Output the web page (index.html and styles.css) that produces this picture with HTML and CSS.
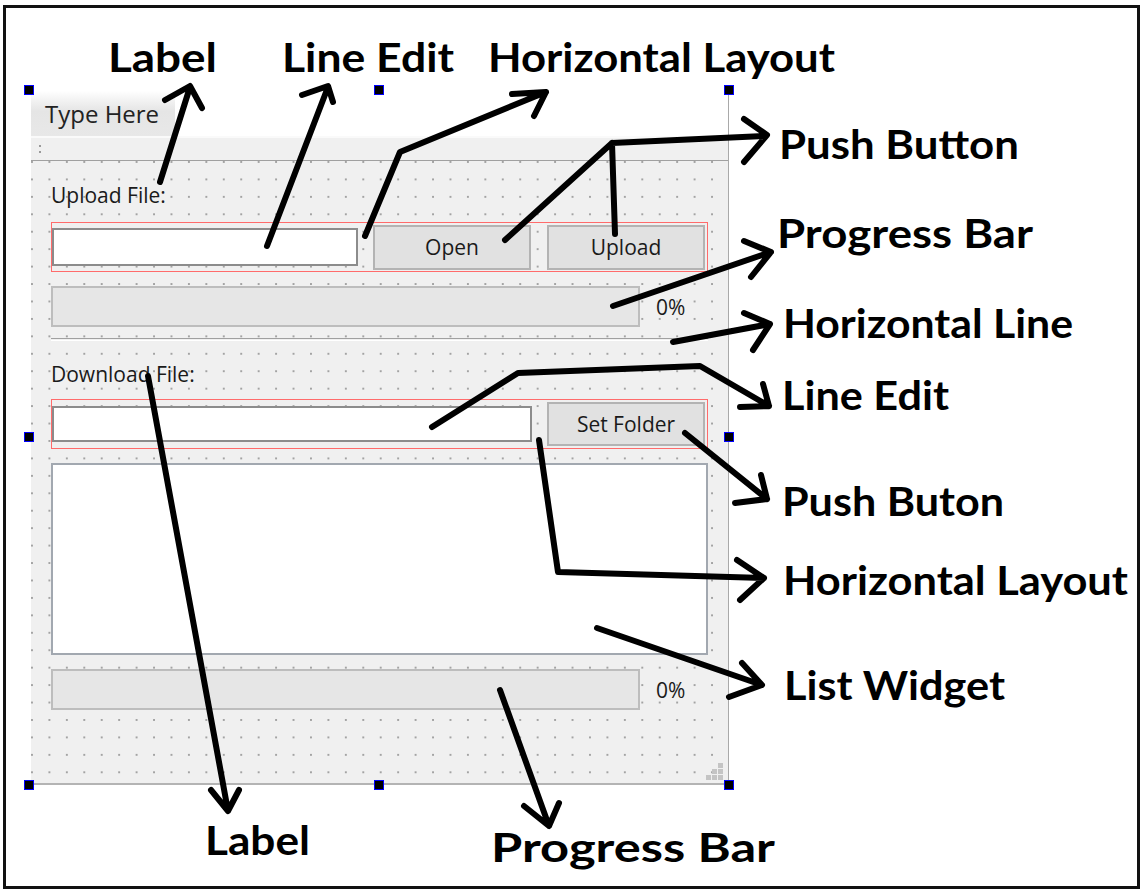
FILE: index.html
```html
<!DOCTYPE html>
<html lang="en">
<head>
    <meta charset="UTF-8">
    <title>Qt Designer form - widget map</title>
    <link rel="stylesheet" href="styles.css">
</head>
<body>
<div class="page">
    <div class="frame">
        <div class="form">
            <div class="menubar"><span class="menu-item">Type Here</span></div>
            <div class="toolbar"><span class="grip"></span></div>
            <div class="central">
                <div class="label first">Upload File:</div>
                <div class="hbox">
                    <div class="line-edit"></div>
                    <button class="push">Open</button>
                    <button class="push">Upload</button>
                </div>
                <div class="progress-row">
                    <div class="progress"></div>
                    <span class="percent">0%</span>
                </div>
                <div class="hline"></div>
                <div class="label">Download File:</div>
                <div class="hbox">
                    <div class="line-edit"></div>
                    <button class="push">Set Folder</button>
                </div>
                <div class="list"></div>
                <div class="progress-row">
                    <div class="progress"></div>
                    <span class="percent">0%</span>
                </div>
                <svg class="size-grip" width="18" height="18" viewBox="0 0 18 18">
                    <rect x="13" y="1" width="5" height="5"/>
                    <rect x="7" y="7" width="5" height="5"/>
                    <rect x="13" y="7" width="5" height="5"/>
                    <rect x="1" y="13" width="5" height="5"/>
                    <rect x="7" y="13" width="5" height="5"/>
                    <rect x="13" y="13" width="5" height="5"/>
                </svg>
            </div>
            <!-- selection handles -->
            <span class="handle h-left h-top"></span>
            <span class="handle h-mid h-top"></span>
            <span class="handle h-right h-top"></span>
            <span class="handle h-left h-middle"></span>
            <span class="handle h-right h-middle"></span>
            <span class="handle h-left h-bottom"></span>
            <span class="handle h-mid h-bottom"></span>
            <span class="handle h-right h-bottom"></span>
        </div>
    </div>

    <!-- callouts drawn over the form -->
    <svg class="notes" width="1141" height="891" viewBox="0 0 1141 891">
        <g class="arrows">
            <path d="M160 182 L190 87 M165 100 L190 86 L202 108"/>
            <path d="M267 246 L328 87 M302 95 L328 86 L333 102"/>
            <path d="M365 236 L400 152 L546 92 M512 94 L546 92 L534 116"/>
            <path d="M505 240 L612 143 M615 234 L612 143 L766 136 M744 119 L767 135 L744 162"/>
            <path d="M613 306 L771 252 M744 241 L771 252 L751 277"/>
            <path d="M673 342 L770 324 M744 313 L770 324 L753 350"/>
            <path d="M432 427 L518 373 L700 366 L769 406 M740 407 L769 406 L763 384"/>
            <path d="M685 433 L767 499 M735 503 L767 499 L761 475"/>
            <path d="M539 440 L558 572 L764 578 M737 560 L764 578 L740 600"/>
            <path d="M597 628 L762 685 M742 663 L762 685 L729 697"/>
            <path d="M148 376 L228 811 M211 790 L228 811 L239 790"/>
            <path d="M500 690 L549 826 M524 806 L549 826 L559 803"/>
        </g>
        <g class="note-text">
            <text x="108" y="72" textLength="109" lengthAdjust="spacingAndGlyphs">Label</text>
            <text x="282" y="72" textLength="172" lengthAdjust="spacingAndGlyphs">Line Edit</text>
            <text x="488" y="72" textLength="347" lengthAdjust="spacingAndGlyphs">Horizontal Layout</text>
            <text x="779" y="159" textLength="240" lengthAdjust="spacingAndGlyphs">Push Button</text>
            <text x="777" y="248" textLength="256" lengthAdjust="spacingAndGlyphs">Progress Bar</text>
            <text x="783" y="338" textLength="290" lengthAdjust="spacingAndGlyphs">Horizontal Line</text>
            <text x="782" y="410" textLength="167" lengthAdjust="spacingAndGlyphs">Line Edit</text>
            <text x="782" y="516" textLength="222" lengthAdjust="spacingAndGlyphs">Push Buton</text>
            <text x="783" y="595" textLength="345" lengthAdjust="spacingAndGlyphs">Horizontal Layout</text>
            <text x="784" y="700" textLength="221" lengthAdjust="spacingAndGlyphs">List Widget</text>
            <text x="205" y="855" textLength="105" lengthAdjust="spacingAndGlyphs">Label</text>
            <text x="491" y="862" textLength="284" lengthAdjust="spacingAndGlyphs">Progress Bar</text>
        </g>
    </svg>
</div>
</body>
</html>
```

FILE: styles.css
```css
body {
    margin: 0;
    background: #fff;
    font-family: 'Open Sans', 'Noto Sans', sans-serif;
    color: #1a1a1a;
}
.page {
    position: relative;
    width: 1141px;
    height: 891px;
    overflow: hidden;
}
.frame {
    box-sizing: border-box;
    width: 1137px;
    height: 884px;
    margin: 5px 0 0 3px;
    border: 3px solid #111;
    padding: 83px 0 0 25px;
}

/* designer form */
.form {
    position: relative;
    box-sizing: border-box;
    width: 698px;
    height: 694px;
    border-right: 1px solid #a9a9a9;
    border-bottom: 2px solid #b4b4b4;
}
.menubar {
    height: 45px;
    background: #fff;
    display: flex;
}
.menu-item {
    width: 130px;
    padding-left: 14px;
    font-size: 24px;
    line-height: 45px;
    color: #222;
    background: linear-gradient(to bottom, #fff 0%, #f6f6f6 14%, #e5e5e5 45%, #e8e8e8 100%);
}
.toolbar {
    box-sizing: border-box;
    height: 25px;
    border-top: 2px solid #fafafa;
    border-bottom: 1px solid #a0a0a0;
    background: #f0f0f0;
    padding: 7px 0 0 8px;
}
.grip {
    display: block;
    width: 2px;
    height: 2px;
    background: #9a9a9a;
    box-shadow: 0 6px 0 #9a9a9a;
}
.central {
    box-sizing: border-box;
    height: 622px;
    padding: 0 20px;
    display: flex;
    flex-direction: column;
    background-color: #f0f0f0;
    background-image: radial-gradient(circle at 1px 1px, #a3a3a3 0.9px, transparent 1.4px);
    background-size: 17.45px 17.45px;
}
.label {
    height: 24px;
    line-height: 24px;
    font-size: 21px;
    margin-top: 21px;
}
.label.first {
    margin-top: 22px;
}
.hbox {
    box-sizing: border-box;
    height: 50px;
    margin-top: 14px;
    border: 1px solid #ff6b6b;
    padding: 0 2px 0 0;
    display: flex;
    align-items: center;
    gap: 15px;
}
.label.first + .hbox {
    margin-top: 15px;
}
.line-edit {
    flex: 1;
    box-sizing: border-box;
    height: 38px;
    background: #fff;
    border: 2px solid #8c8c8c;
}
.hbox .push + .push {
    margin-left: 1px;
}
.push {
    box-sizing: border-box;
    width: 158px;
    height: 45px;
    background: #e1e1e1;
    border: 2px solid #b3b3b3;
    font-family: 'Open Sans', 'Noto Sans', sans-serif;
    font-size: 21px;
    color: #1a1a1a;
    padding: 0;
}
.label + .hbox {
    margin-top: 13px;
}
.label + .hbox .line-edit {
    height: 36px;
}
.label + .hbox .push {
    height: 44px;
}
.label.first + .hbox .line-edit {
    height: 38px;
}
.label.first + .hbox .push {
    height: 45px;
}
.progress-row {
    height: 41px;
    margin-top: 14px;
    display: flex;
    align-items: center;
}
.progress {
    flex: 1;
    box-sizing: border-box;
    height: 100%;
    background: #e6e6e6;
    border: 2px solid #bdbdbd;
}
.percent {
    width: 52px;
    padding-left: 16px;
    font-size: 21px;
}
.hline {
    height: 1px;
    margin-top: 11px;
    border-top: 1px solid #a0a0a0;
    border-bottom: 1px solid #fff;
}
.list {
    box-sizing: border-box;
    height: 192px;
    margin-top: 14px;
    background: #fff;
    border: 2px solid #a2a8b0;
}
.size-grip {
    margin: auto -15px 3px auto;
    fill: #c4c4c4;
}

/* selection handles */
.handle {
    position: absolute;
    box-sizing: border-box;
    width: 10px;
    height: 10px;
    background: #000;
    border: 1px solid #0000ff;
}
.h-left { left: -7px; }
.h-mid { left: 343px; }
.h-right { left: 693px; }
.h-top { top: -6px; }
.h-middle { top: 341px; }
.h-bottom { top: 689px; }

/* annotations */
.notes {
    position: absolute;
    top: 0;
    left: 0;
    pointer-events: none;
}
.arrows path {
    fill: none;
    stroke: #000;
    stroke-width: 6;
    stroke-linecap: round;
    stroke-linejoin: round;
}
.note-text text {
    font-family: Lato, 'Open Sans', sans-serif;
    font-weight: 700;
    font-size: 40px;
    fill: #000;
}
```
